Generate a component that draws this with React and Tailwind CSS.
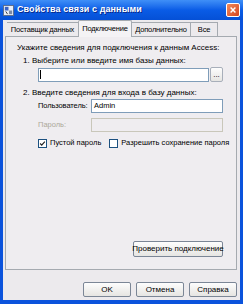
import React from 'react'

const font = { fontFamily: '"Liberation Sans", Arial, sans-serif' }

const XpButton = ({ children, className = '' }) => (
  <div
    className={`flex items-center justify-center h-[15px] rounded-[2px] border border-[#7b8696] bg-gradient-to-b from-[#fdfdfd] to-[#e6e5e2] text-[8px] text-black whitespace-nowrap ${className}`}
  >
    {children}
  </div>
)

const Tab = ({ label, active, className = '' }) => (
  <div
    className={
      active
        ? `relative z-10 -mb-px h-[17px] flex items-center justify-center border border-b-0 border-[#a5aab0] bg-[#f4f3f5] rounded-t-[2px] text-[7.5px] tracking-[-0.2px] whitespace-nowrap ${className}`
        : `h-[14px] flex items-center justify-center border border-b-0 border-l-0 border-[#a5aab0] bg-[#eceaed] text-[7.5px] tracking-[-0.2px] whitespace-nowrap ${className}`
    }
  >
    {label}
  </div>
)

const Check = ({ checked }) => (
  <div className="w-[9px] h-[9px] border border-[#1c5180] bg-white flex items-center justify-center shrink-0">
    {checked && (
      <svg viewBox="0 0 9 9" className="w-[7px] h-[7px]">
        <path d="M1.5 4.5 L3.5 6.5 L7.5 2" fill="none" stroke="#222" strokeWidth="1.5" />
      </svg>
    )}
  </div>
)

export default function App() {
  return (
    <div className="w-[243px] h-[304px] bg-[#0b53dc] flex flex-col overflow-hidden" style={font}>
      {/* title bar */}
      <div className="h-[20px] shrink-0 flex items-center pl-[3px] pr-[3px] bg-gradient-to-b from-[#3f8ff7] via-[#0a5ce6] to-[#0550d6]">
        <svg viewBox="0 0 12 12" className="w-[11px] h-[11px] shrink-0">
          <rect x="0.5" y="0.5" width="11" height="11" fill="#e8eef8" stroke="#5b6b8a" />
          <rect x="2" y="2" width="4" height="4" fill="#3a62c4" />
          <rect x="6.5" y="6" width="3.5" height="4" fill="#7a8aa8" />
          <path d="M3 7 L5 10" stroke="#333" strokeWidth="1" />
        </svg>
        <span className="ml-[3px] text-white font-bold text-[9px] tracking-[0.1px] [text-shadow:1px_1px_0_#0a2a8a]">
          Свойства связи с данными
        </span>
        <div className="ml-auto w-[14px] h-[14px] rounded-[2px] border border-white bg-gradient-to-br from-[#f08a5c] to-[#d4431c] flex items-center justify-center">
          <svg viewBox="0 0 10 10" className="w-[8px] h-[8px]">
            <path d="M2 2 L8 8 M8 2 L2 8" stroke="white" strokeWidth="1.8" />
          </svg>
        </div>
      </div>

      {/* client */}
      <div className="flex-1 mx-[3px] mb-[4px] bg-[#eceaed] flex flex-col pl-[2px] pr-[3px] text-black">
        {/* tabs */}
        <div className="h-[16px] flex items-end pl-[2px]">
          <Tab label="Поставщик данных" className="w-[72px] border-l" />
          <Tab label="Подключение" active className="w-[54px] -ml-px" />
          <Tab label="Дополнительно" className="w-[59px]" />
          <Tab label="Все" className="w-[27px]" />
        </div>

        {/* panel */}
        <div className="h-[234px] border border-[#a5aab0] bg-[#efedf0] flex flex-col pt-[6px] pl-[11px] pr-[13px] text-[8px] leading-[10px] whitespace-nowrap">
          <div>Укажите сведения для подключения к данным Access:</div>
          <div className="mt-[3px] pl-[6px]">1. Выберите или введите имя базы данных:</div>
          <div className="mt-[1px] pl-[21px] flex items-center gap-[1px]">
            <div className="flex-1 h-[14px] border border-[#7f9db9] bg-white flex items-center pl-[1px]">
              <div className="w-px h-[9px] bg-black" />
            </div>
            <XpButton className="w-[13px] h-[15px] border-[#a8afba]">...</XpButton>
          </div>
          <div className="mt-[6px] pl-[6px]">2. Введите сведения для входа в базу данных:</div>
          <div className="mt-[1px] pl-[21px] flex items-center text-[7.5px]">
            <span className="w-[53px] tracking-[-0.1px]">Пользователь:</span>
            <div className="flex-1 h-[14px] border border-[#7f9db9] bg-white flex items-center pl-[2px]">Admin</div>
          </div>
          <div className="mt-[5px] pl-[21px] flex items-center text-[7.5px]">
            <span className="w-[53px] text-[#aca899]">Пароль:</span>
            <div className="flex-1 h-[14px] border border-[#c9c7ba] bg-[#efedf0]" />
          </div>
          <div className="mt-[6px] pl-[21px] flex items-center text-[7.5px]">
            <Check checked />
            <span className="ml-[3px]">Пустой пароль</span>
            <div className="ml-[8px]">
              <Check />
            </div>
            <span className="ml-[3px]">Разрешить сохранение пароля</span>
          </div>
          <div className="flex-1" />
          <div className="flex justify-end mb-[12px]">
            <XpButton className="w-[90px] h-[16px] text-[7.5px]">Проверить подключение</XpButton>
          </div>
        </div>

        {/* bottom buttons */}
        <div className="mt-[12px] flex justify-end gap-[5px]">
          <XpButton className="w-[48px]">OK</XpButton>
          <XpButton className="w-[48px]">Отмена</XpButton>
          <XpButton className="w-[48px]">Справка</XpButton>
        </div>
      </div>
    </div>
  )
}
